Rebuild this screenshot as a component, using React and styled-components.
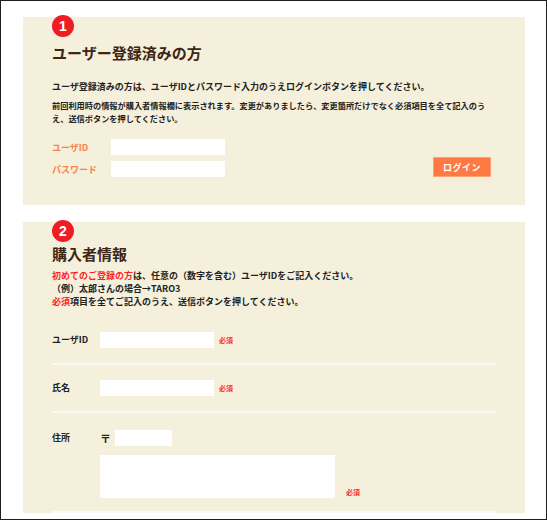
import styled, { createGlobalStyle } from "styled-components";

const GlobalStyle = createGlobalStyle`
  body {
    margin: 0;
    background: #fff;
    font-family: "Noto Sans CJK JP", "Noto Sans", sans-serif;
  }
`;

const Frame = styled.div`
  box-sizing: border-box;
  width: 547px;
  height: 520px;
  border: 1px solid #1e1e1e;
  overflow: hidden;
  padding: 16px 21px 0 22px;
`;

const Panel = styled.section`
  position: relative;
  background: #f5f0dc;
  padding: ${(p) => p.$pad};
  margin-bottom: 17px;
`;

const Badge = styled.span`
  position: absolute;
  top: -2px;
  left: 29px;
  width: 22px;
  height: 22px;
  border-radius: 50%;
  background: #ee1d25;
  color: #fff;
  font: bold 14px/22px "Liberation Sans", Arial, sans-serif;
  text-align: center;
`;

const Heading = styled.h2`
  margin: 0 0 ${(p) => p.$gap}px;
  font-size: 15px;
  line-height: 19px;
  font-weight: 700;
  color: #3d2614;
`;

const Lead = styled.p`
  margin: 0;
  font-size: 9px;
  line-height: 13px;
  font-weight: 700;
  color: #222;
`;

const Note = styled.p`
  margin: 6px 0 0;
  padding-right: 5px;
  font-size: 8.2px;
  line-height: 13px;
  font-weight: 700;
  color: #222;
`;

const LoginForm = styled.div`
  display: flex;
  justify-content: space-between;
  align-items: flex-end;
  margin-top: 14px;
  padding-right: 5px;
`;

const Fields = styled.div`
  display: grid;
  grid-template-columns: 59px 114px;
  row-gap: 6px;
  align-items: center;
`;

const OrangeLabel = styled.label`
  color: #f48447;
  font-size: 9px;
  font-weight: 700;
`;

const TextInput = styled.input`
  box-sizing: border-box;
  width: ${(p) => p.$w}px;
  height: 16px;
  padding: 0;
  border: 1px solid #fff;
  background: #fff;
  outline: none;
`;

const LoginButton = styled.button`
  width: 58px;
  height: 20px;
  padding: 0;
  background: #ff7943;
  border: 1px solid #ffa277;
  color: #fff;
  font-family: inherit;
  font-size: 9px;
  font-weight: 700;
  letter-spacing: 0.5px;
`;

const Intro = styled(Lead)`
  margin-bottom: 9px;
`;

const Red = styled.span`
  color: #ff1f1f;
`;

const Row = styled.div`
  display: flex;
  align-items: ${(p) => (p.$top ? "flex-start" : "center")};
  padding: 15px 0 ${(p) => (p.$top ? 13 : 15)}px;
  border-bottom: 2px solid #fbf9f1;
`;

const RowLabel = styled.div`
  width: 48px;
  flex: none;
  font-size: 9px;
  line-height: ${(p) => (p.$top ? 20 : 16)}px;
  font-weight: 700;
  color: #222;
`;

const FieldLine = styled.div`
  display: flex;
  align-items: ${(p) => p.$align || "center"};
  gap: ${(p) => p.$gap || 5}px;
  min-height: ${(p) => p.$h || 0}px;
`;

const Stack = styled.div`
  display: flex;
  flex-direction: column;
  gap: 7px;
`;

const Required = styled.span`
  color: #ff2b2b;
  font-size: 7px;
  font-weight: 700;
  line-height: 9px;
  margin-bottom: ${(p) => p.$mb || 0}px;
`;

const Postal = styled.span`
  width: 10px;
  font-size: 11px;
  line-height: 11px;
  font-weight: 900;
  color: #222;
  text-align: center;
`;

const AddressBox = styled.textarea`
  box-sizing: border-box;
  width: 235px;
  height: 43px;
  padding: 0;
  border: 1px solid #fff;
  background: #fff;
  resize: none;
  outline: none;
`;

const App = () => (
  <Frame>
    <GlobalStyle />
    <Panel $pad="26px 29px 28px">
      <Badge>1</Badge>
      <Heading $gap={18}>ユーザー登録済みの方</Heading>
      <Lead>ユーザ登録済みの方は、ユーザIDとパスワード入力のうえログインボタンを押してください。</Lead>
      <Note>
        前回利用時の情報が購入者情報欄に表示されます。変更がありましたら、変更箇所だけでなく必須項目を全て記入のうえ、送信ボタンを押してください。
      </Note>
      <LoginForm>
        <Fields>
          <OrangeLabel>ユーザID</OrangeLabel>
          <TextInput $w={114} />
          <OrangeLabel>パスワード</OrangeLabel>
          <TextInput $w={114} type="password" />
        </Fields>
        <LoginButton>ログイン</LoginButton>
      </LoginForm>
    </Panel>

    <Panel $pad="22px 29px 0">
      <Badge>2</Badge>
      <Heading $gap={6}>購入者情報</Heading>
      <Intro>
        <Red>初めてのご登録の方</Red>は、任意の（数字を含む）ユーザIDをご記入ください。
        <br />
        （例）太郎さんの場合→TARO3
        <br />
        <Red>必須</Red>項目を全てご記入のうえ、送信ボタンを押してください。
      </Intro>
      <Row>
        <RowLabel>ユーザID</RowLabel>
        <FieldLine>
          <TextInput $w={114} />
          <Required>必須</Required>
        </FieldLine>
      </Row>
      <Row>
        <RowLabel>氏名</RowLabel>
        <FieldLine>
          <TextInput $w={114} />
          <Required>必須</Required>
        </FieldLine>
      </Row>
      <Row $top>
        <RowLabel $top>住所</RowLabel>
        <Stack>
          <FieldLine $gap={5} $h={20}>
            <Postal>〒</Postal>
            <TextInput $w={57} />
          </FieldLine>
          <FieldLine $align="flex-end" $gap={11}>
            <AddressBox />
            <Required $mb={1}>必須</Required>
          </FieldLine>
        </Stack>
      </Row>
    </Panel>
  </Frame>
);

export default App;
